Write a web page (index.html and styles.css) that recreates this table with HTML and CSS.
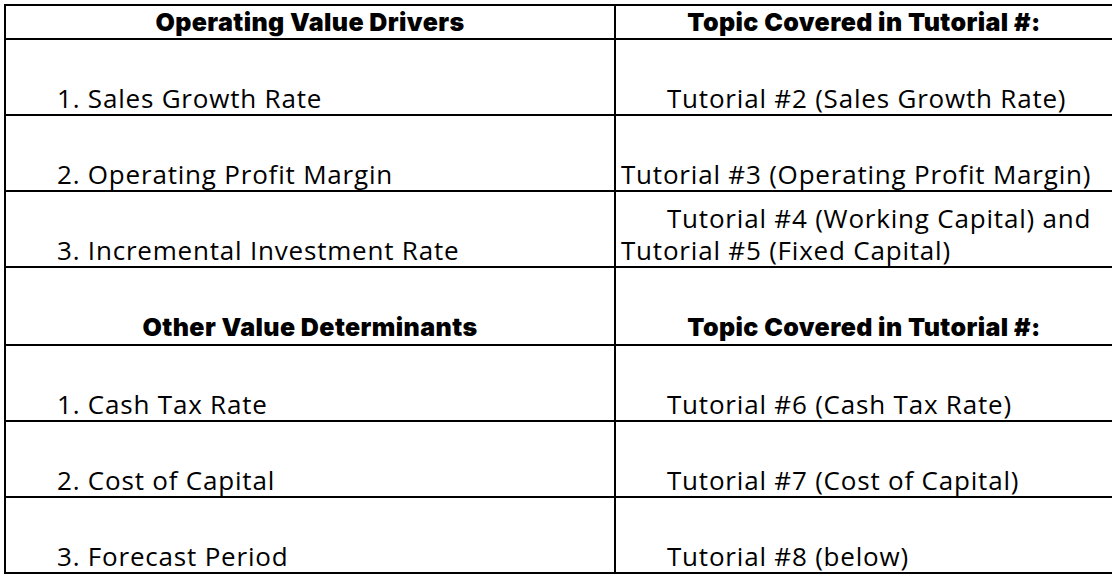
FILE: index.html
```html
<!DOCTYPE html>
<html>
<head>
<meta charset="utf-8">
<link rel="stylesheet" href="styles.css">
</head>
<body>
<table class="drivers">
  <tr class="head">
    <th class="col-left">Operating Value Drivers</th>
    <th class="col-right">Topic Covered in Tutorial #:</th>
  </tr>
  <tr class="row">
    <td class="item">1. Sales Growth Rate</td>
    <td class="topic indent">Tutorial #2 (Sales Growth Rate)</td>
  </tr>
  <tr class="row">
    <td class="item">2. Operating Profit Margin</td>
    <td class="topic">Tutorial #3 (Operating Profit Margin)</td>
  </tr>
  <tr class="row">
    <td class="item">3. Incremental Investment Rate</td>
    <td class="topic indent">Tutorial #4 (Working Capital) and Tutorial #5 (Fixed Capital)</td>
  </tr>
  <tr class="row subhead">
    <th>Other Value Determinants</th>
    <th>Topic Covered in Tutorial #:</th>
  </tr>
  <tr class="row">
    <td class="item">1. Cash Tax Rate</td>
    <td class="topic indent">Tutorial #6 (Cash Tax Rate)</td>
  </tr>
  <tr class="row">
    <td class="item">2. Cost of Capital</td>
    <td class="topic indent">Tutorial #7 (Cost of Capital)</td>
  </tr>
  <tr class="row">
    <td class="item">3. Forecast Period</td>
    <td class="topic indent">Tutorial #8 (below)</td>
  </tr>
</table>
</body>
</html>
```

FILE: styles.css
```css
html, body {
  margin: 0;
  padding: 0;
  background: #ffffff;
}

body {
  font-family: "Open Sans", "Liberation Sans", sans-serif;
  color: #000;
}

.drivers {
  margin: 4px 0 0 4px;
  width: 1106px;
  border-collapse: collapse;
  table-layout: fixed;
}

.drivers th,
.drivers td {
  border: 2px solid #000;
  padding: 0;
  vertical-align: bottom;
}

.col-left { width: 608px; }
.col-right { width: 496px; }

.drivers th {
  font-family: "Inter", "Liberation Sans", sans-serif;
  font-weight: 900;
  font-size: 25px;
  line-height: 30px;
  letter-spacing: 0.4px;
  text-align: center;
}

.head th {
  height: 31px;
  padding-bottom: 1px;
}

.row > * {
  height: 74px;
}

.subhead th {
  padding-bottom: 2px;
}

.drivers td {
  font-size: 26px;
  line-height: 32px;
  letter-spacing: 0.8px;
}

.item {
  padding-left: 51px !important;
}

.topic {
  padding-left: 5px !important;
}

.indent {
  text-indent: 46px;
}

.subhead th:last-child,
.head th:last-child {
  padding-right: 10px;
}
```
